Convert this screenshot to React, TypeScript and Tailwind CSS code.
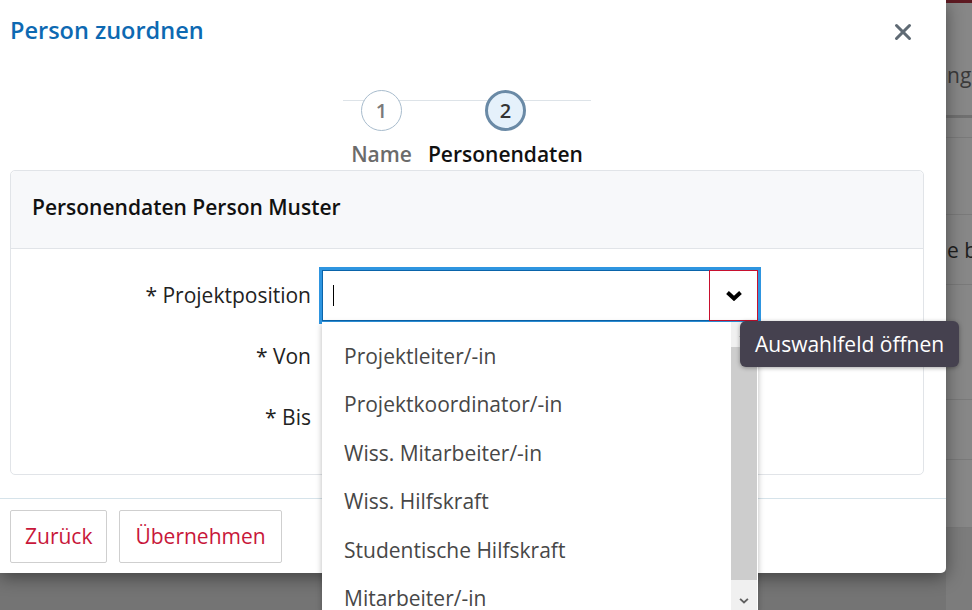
import { X } from "lucide-react";

const OPTIONS = [
  "Projektleiter/-in",
  "Projektkoordinator/-in",
  "Wiss. Mitarbeiter/-in",
  "Wiss. Hilfskraft",
  "Studentische Hilfskraft",
  "Mitarbeiter/-in",
];

const STEPS = [
  { nr: 1, label: "Name", active: false },
  { nr: 2, label: "Personendaten", active: true },
];

function Chevron({ className, w = 3.2 }: { className?: string; w?: number }) {
  return (
    <svg viewBox="0 0 16 10" className={className} fill="none">
      <path d="M1.5 1.5 8 7.5 14.5 1.5" stroke="currentColor" strokeWidth={w} />
    </svg>
  );
}

function PageBehind() {
  // the page under the dialog, only its right edge is visible
  return (
    <div className="flex h-full justify-end">
      <div className="flex w-[26px] flex-col bg-[#878787] text-[21px] leading-[26px] whitespace-nowrap">
        <div className="h-[3px] bg-[#5e1a22]" />
        <div className="h-[112px] pt-[59px] pl-px text-[#3a3a3a]">ng</div>
        <div className="h-[3px] bg-[#707070]" />
        <div className="h-[20px] border-b border-[#7a7a7a]" />
        <div className="h-[77px] border-b border-[#7a7a7a]" />
        <div className="h-[70px] border-b border-[#7a7a7a] pt-[22px] pl-px text-[#1e1e1e]">e b</div>
        <div className="h-[115px] border-b border-[#7a7a7a]" />
        <div className="h-[60px] border-b border-[#7a7a7a]" />
        <div className="h-[68px] border-b border-[#7a7a7a]" />
        <div className="flex-1 bg-[#7c7c7c]" />
      </div>
    </div>
  );
}

export default function App() {
  return (
    <div className="relative h-[610px] w-[972px] overflow-hidden bg-[#747474] font-['Open_Sans',sans-serif]">
      <PageBehind />

      <div className="absolute top-0 left-0 flex h-[573px] w-[946px] flex-col rounded-br-[5px] bg-white shadow-[0_4px_18px_rgba(0,0,0,0.45)]">
        <div className="flex items-start justify-between pt-[16px] pr-[30px] pl-[10px]">
          <h2 className="text-[23.5px] leading-[29px] font-semibold text-[#0d69b2]">Person zuordnen</h2>
          <X className="mt-[3px] size-[26px] text-[#5f6a74]" strokeWidth={2.8} />
        </div>

        <div className="mt-[45px] flex justify-center pr-[12px]">
          <div className="relative flex gap-4">
            <div className="absolute top-[10px] -right-2 -left-2 h-px bg-[#dde3e8]" />
            {STEPS.map((s) => (
              <div key={s.nr} className="relative flex flex-col items-center">
                <div
                  className={
                    s.active
                      ? "flex size-[41px] items-center justify-center rounded-full border-[3px] border-[#6a8aa6] bg-[#e5f1fb] text-[20px] font-semibold text-[#333]"
                      : "flex size-[41px] items-center justify-center rounded-full border border-[#a8bccd] bg-white text-[20px] font-semibold text-[#7a7a7a]"
                  }
                >
                  {s.nr}
                </div>
                <div
                  className={
                    s.active
                      ? "mt-[10px] text-[21px] leading-[26px] font-semibold text-[#111]"
                      : "mt-[10px] text-[21px] leading-[26px] font-semibold text-[#6b6b6b]"
                  }
                >
                  {s.label}
                </div>
              </div>
            ))}
          </div>
        </div>

        <div className="mt-[3px] mr-[22px] ml-[10px] rounded-[5px] border border-[#e1e4e8]">
          <div className="flex h-[78px] items-center rounded-t-[5px] border-b border-[#e1e4e8] bg-[#f7f8fa] pb-[3px] pl-[21px] text-[21px] font-semibold text-[#111]">
            Personendaten Person Muster
          </div>
          <div className="grid grid-cols-[300px_436px] gap-x-[11px] gap-y-[10px] pt-[21px] pb-[31px] text-[21px] text-[#222]">
            <label className="flex h-[51px] items-center justify-end">* Projektposition</label>
            <div className="relative z-10 flex h-[51px] border border-[#0a64aa] bg-white ring-[3px] ring-[#2e95e0]">
              <div className="flex flex-1 items-center pl-[10px]">
                <span className="h-[21px] w-px bg-black" />
              </div>
              <div className="relative -my-px -mr-px flex w-[49px] items-center justify-center border border-[#c8102e] bg-white">
                <Chevron className="h-[10px] w-[16px] text-black" w={4} />
                <div className="absolute top-[50px] left-[30px] z-30 rounded-[6px] bg-[#45414f] px-[15px] py-[8px] text-[21px] leading-[30px] whitespace-nowrap text-white shadow-[0_1px_4px_rgba(0,0,0,0.35)]">
                  Auswahlfeld öffnen
                </div>
              </div>

              <ul className="absolute top-[calc(100%+2px)] -left-px z-20 h-[290px] w-[436px] overflow-hidden bg-white pt-[10px] shadow-[0_2px_6px_rgba(0,0,0,0.28)]">
                {OPTIONS.map((o) => (
                  <li key={o} className="flex h-[48.5px] items-center pl-[22px] text-[21px] text-[#474747]">
                    {o}
                  </li>
                ))}
                <div className="absolute top-0 right-px flex h-full w-[26px] flex-col bg-[#f0f0f0]">
                  <div className="flex h-[25px] items-center justify-center">
                    <Chevron className="h-[6px] w-[10px] rotate-180 text-[#606060]" />
                  </div>
                  <div className="h-[233px] bg-[#cdcdcd]" />
                  <div className="flex flex-1 items-end justify-center pb-[8px]">
                    <Chevron className="h-[6px] w-[10px] text-[#606060]" />
                  </div>
                </div>
              </ul>
            </div>

            <label className="flex h-[51px] items-center justify-end">* Von</label>
            <div className="h-[51px] border border-[#ccc]" />
            <label className="flex h-[51px] items-center justify-end">* Bis</label>
            <div className="h-[51px] border border-[#ccc]" />
          </div>
        </div>

        <div className="mt-[23px] flex gap-[12px] border-t border-[#d6e3ea] px-[10px] pt-[11px]">
          <button className="h-[53px] rounded-[2px] border border-[#cfcfcf] px-[14px] text-[21px] text-[#c8173a]">Zurück</button>
          <button className="h-[53px] rounded-[2px] border border-[#cfcfcf] px-[15px] text-[21px] text-[#c8173a]">Übernehmen</button>
        </div>
      </div>
    </div>
  );
}
